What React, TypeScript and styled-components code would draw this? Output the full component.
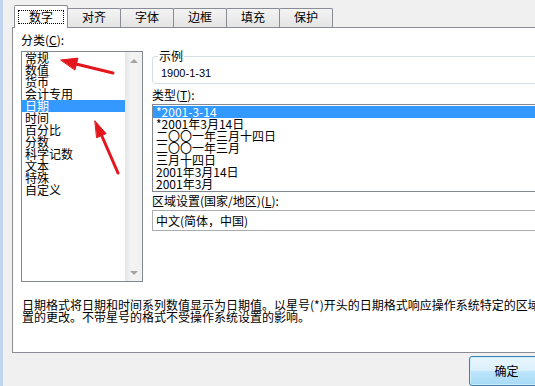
import styled, { createGlobalStyle } from "styled-components";

const CATEGORIES = [
  "常规",
  "数值",
  "货币",
  "会计专用",
  "日期",
  "时间",
  "百分比",
  "分数",
  "科学记数",
  "文本",
  "特殊",
  "自定义",
];

const DATE_TYPES = [
  "*2001-3-14",
  "*2001年3月14日",
  "二〇〇一年三月十四日",
  "二〇〇一年三月",
  "三月十四日",
  "2001年3月14日",
  "2001年3月",
];

const TABS = ["数字", "对齐", "字体", "边框", "填充", "保护"];

const GlobalStyle = createGlobalStyle`
  html, body {
    margin: 0;
    padding: 0;
    background: #f0f0f0;
    overflow: hidden;
  }
  body {
    font-family: "Noto Sans CJK SC", "Liberation Sans", sans-serif;
    font-size: 12px;
    color: #000;
  }
`;

const Window = styled.div`
  position: relative;
  width: 535px;
  height: 386px;
  overflow: hidden;
  display: flex;
  background: #f0f0f0;
`;

const FrameEdge = styled.div`
  flex: none;
  width: 3px;
  background: #bfd6ee;
`;

const Dialog = styled.div`
  flex: none;
  display: flex;
  flex-direction: column;
  padding: 5px 0 0 9px;
`;

const TabBar = styled.div`
  position: relative;
  z-index: 1;
  display: flex;
  align-items: flex-end;
  height: 22px;
  padding-left: 2px;
`;

const Tab = styled.div<{ $active?: boolean }>`
  box-sizing: border-box;
  width: 54px;
  height: ${({ $active }) => ($active ? "23px" : "19px")};
  margin-bottom: ${({ $active }) => ($active ? "-1px" : "0")};
  margin-left: -1px;
  display: flex;
  align-items: center;
  justify-content: center;
  padding-bottom: ${({ $active }) => ($active ? "0" : "2px")};
  border: 1px solid #898c95;
  border-bottom: none;
  border-radius: 2px 2px 0 0;
  background: ${({ $active }) =>
    $active ? "#fff" : "linear-gradient(#f4f4f4, #e4e4e4)"};
  line-height: 12px;

  &:first-child {
    margin-left: 0;
  }
`;

const FocusRect = styled.span`
  padding: 0 10px;
  border: 1px dotted #000;
  line-height: 12px;
`;

const Panel = styled.div`
  box-sizing: border-box;
  width: 628px;
  height: 340px;
  border: 1px solid #898c95;
  background: #fff;
  padding: 6px 8px 0;
  display: flex;
  flex-direction: column;
`;

const Columns = styled.div`
  display: grid;
  grid-template-columns: 122px 1fr;
  column-gap: 9px;
  align-items: start;
`;

const Column = styled.div<{ $offset?: number }>`
  display: flex;
  flex-direction: column;
  padding-top: ${({ $offset }) => $offset ?? 0}px;
`;

const Label = styled.div<{ $before?: number; $after?: number }>`
  line-height: 12px;
  height: 12px;
  margin-top: ${({ $before }) => $before ?? 0}px;
  margin-bottom: ${({ $after }) => $after ?? 0}px;
  white-space: nowrap;
`;

const Key = styled.span`
  text-decoration: underline;
`;

const CategoryBox = styled.div`
  box-sizing: border-box;
  width: 122px;
  height: 231px;
  border: 1px solid #828790;
  display: flex;
`;

const ItemList = styled.div`
  flex: 1;
  display: flex;
  flex-direction: column;
`;

const Item = styled.div<{ $selected?: boolean }>`
  height: 12px;
  line-height: 12px;
  padding-left: 3px;
  white-space: nowrap;
  background: ${({ $selected }) => ($selected ? "#3399ff" : "transparent")};
  color: ${({ $selected }) => ($selected ? "#fff" : "#000")};
`;

const Scrollbar = styled.div`
  flex: none;
  width: 17px;
  display: flex;
  flex-direction: column;
  justify-content: space-between;
  background: linear-gradient(90deg, #e6e6e6, #f4f4f4 40%, #f0f0f0);
`;

const ScrollButton = styled.div`
  height: 17px;
  display: flex;
  align-items: center;
  justify-content: center;
`;

const Arrow = styled.span<{ $dir: "up" | "down" }>`
  width: 0;
  height: 0;
  border-left: 4px solid transparent;
  border-right: 4px solid transparent;
  ${({ $dir }) =>
    $dir === "up"
      ? "border-bottom: 4px solid #a3a3a3;"
      : "border-top: 4px solid #a3a3a3;"}
`;

const SampleGroup = styled.fieldset`
  margin: 0;
  padding: 5px 5px 3px 5px;
  border: 1px solid #d5dfe5;
  border-radius: 3px;
  min-width: 0;
`;

const Legend = styled.legend`
  padding: 0 1px;
  line-height: 12px;
`;

const SampleText = styled.div`
  padding-left: 3px;
  font-family: "Liberation Sans", sans-serif;
  font-size: 11px;
  line-height: 13px;
`;

const TypeList = styled.div`
  box-sizing: border-box;
  height: 88px;
  padding: 1px 0;
  border: 1px solid #828790;
  display: flex;
  flex-direction: column;
  overflow: hidden;
`;

const LocaleBox = styled.div`
  box-sizing: border-box;
  height: 21px;
  border: 1px solid #abadb3;
  padding-left: 3px;
  line-height: 19px;
  white-space: nowrap;
`;

const Description = styled.div`
  margin-top: 17px;
  padding-left: 1px;
  line-height: 12px;
  white-space: nowrap;
`;

const Footer = styled.div`
  display: flex;
  justify-content: flex-end;
  gap: 6px;
  padding: 3px 15px 0 0;
`;

const Button = styled.button`
  box-sizing: border-box;
  width: 75px;
  height: 30px;
  padding: 0;
  border: 1px solid #3c7fb1;
  border-radius: 3px;
  background: linear-gradient(#eaf6fd, #d9f0fc 50%, #bee6fd 50%, #a7d9f5);
  box-shadow: inset 0 0 0 1px #cdeefd;
  font-family: inherit;
  font-size: 12px;
  line-height: 28px;
  color: #000;
`;

const Annotations = styled.svg`
  position: absolute;
  left: 0;
  top: 0;
  pointer-events: none;
`;

const RedArrows = () => (
  <Annotations width={535} height={386} viewBox="0 0 535 386">
    <g fill="#e3161d" stroke="#e3161d" strokeLinecap="round">
      <line x1={113} y1={73} x2={74} y2={63.5} strokeWidth={3} />
      <polygon points="61,60 78,58.1 75,69.7" strokeWidth={1} />
      <line x1={118} y1={173} x2={101} y2={134} strokeWidth={3} />
      <polygon points="95,121 106.1,133.6 96.9,137.6" strokeWidth={1} />
    </g>
  </Annotations>
);

const App = () => {
  return (
    <Window>
      <GlobalStyle />
      <FrameEdge />
      <Dialog>
        <TabBar>
          {TABS.map((tab, i) => (
            <Tab key={tab} $active={i === 0}>
              {i === 0 ? <FocusRect>{tab}</FocusRect> : tab}
            </Tab>
          ))}
        </TabBar>
        <Panel>
          <Columns>
            <Column>
              <Label $after={5}>
                分类(<Key>C</Key>):
              </Label>
              <CategoryBox>
                <ItemList>
                  {CATEGORIES.map((name) => (
                    <Item key={name} $selected={name === "日期"}>
                      {name}
                    </Item>
                  ))}
                </ItemList>
                <Scrollbar>
                  <ScrollButton>
                    <Arrow $dir="up" />
                  </ScrollButton>
                  <ScrollButton>
                    <Arrow $dir="down" />
                  </ScrollButton>
                </Scrollbar>
              </CategoryBox>
            </Column>
            <Column $offset={16}>
              <SampleGroup>
                <Legend>示例</Legend>
                <SampleText>1900-1-31</SampleText>
              </SampleGroup>
              <Label $before={5} $after={3}>
                类型(<Key>T</Key>):
              </Label>
              <TypeList>
                {DATE_TYPES.map((type, i) => (
                  <Item key={type} $selected={i === 0}>
                    {type}
                  </Item>
                ))}
              </TypeList>
              <Label $before={3} $after={3}>
                区域设置(国家/地区)(<Key>L</Key>):
              </Label>
              <LocaleBox>中文(简体，中国)</LocaleBox>
            </Column>
          </Columns>
          <Description>
            <div>
              日期格式将日期和时间系列数值显示为日期值。以星号(*)开头的日期格式响应操作系统特定的区域日期和时间设
            </div>
            <div>置的更改。不带星号的格式不受操作系统设置的影响。</div>
          </Description>
        </Panel>
        <Footer>
          <Button type="button">确定</Button>
          <Button type="button">取消</Button>
        </Footer>
      </Dialog>
      <RedArrows />
    </Window>
  );
};

export default App;
